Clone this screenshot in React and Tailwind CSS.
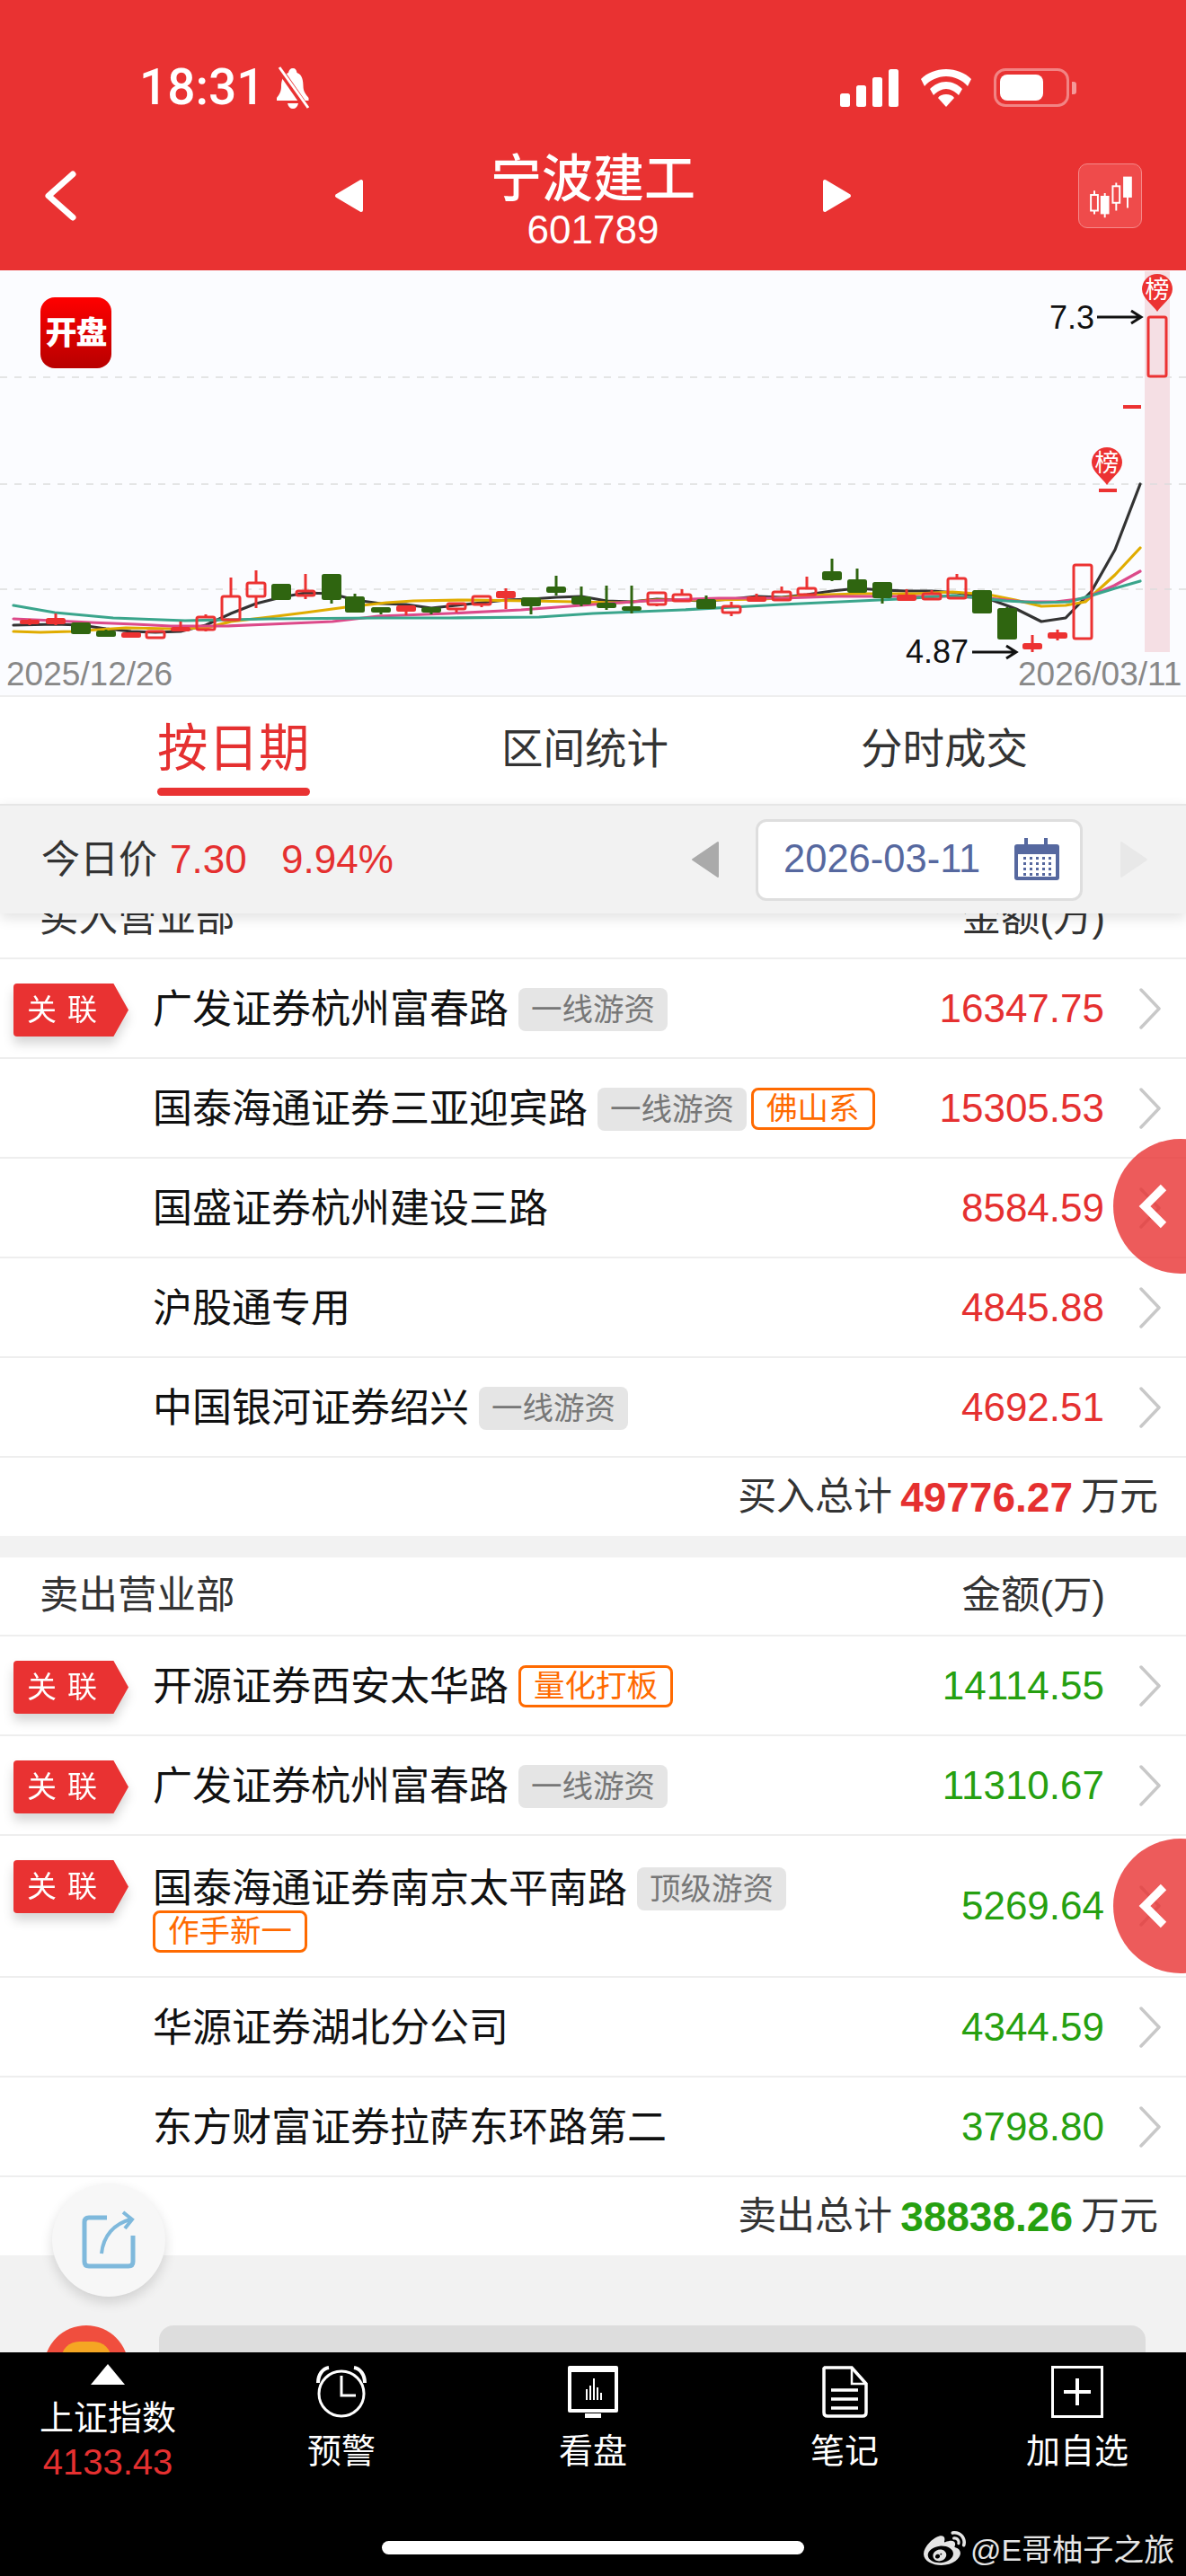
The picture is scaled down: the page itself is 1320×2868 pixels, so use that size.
import React from "react";
import { FaWeibo } from "react-icons/fa";

const RED = "#EC3232";
const GREEN = "#2F6510";

// [cx, bodyTop, bodyBottom, wickTop, wickBottom, type]  s=solid red, h=hollow red, g=green
const candles = [
  [33, 691, 694, 689, 696, "s"], [62, 689, 694, 683, 696, "s"], [90, 694, 705, 694, 705, "g"],
  [118, 703, 708, 701, 709, "g"], [146, 705, 709, 704, 710, "s"], [173, 703, 710, 703, 710, "h"],
  [201, 699, 702, 692, 702, "s"], [229, 687, 701, 684, 703, "h"], [257, 664, 690, 643, 690, "h"],
  [285, 649, 664, 635, 677, "h"], [313, 651, 667, 651, 668, "g"], [340, 658, 663, 639, 667, "h"],
  [369, 640, 667, 640, 672, "g"], [395, 665, 681, 661, 681, "g"], [424, 677, 681, 676, 684, "g"],
  [452, 675, 680, 675, 685, "s"], [480, 677, 681, 677, 684, "g"], [508, 672, 678, 672, 682, "h"],
  [536, 664, 673, 664, 676, "h"], [563, 659, 665, 655, 678, "s"], [591, 666, 674, 666, 684, "g"],
  [619, 654, 659, 641, 663, "g"], [647, 665, 672, 653, 675, "g"], [675, 672, 676, 652, 679, "g"],
  [703, 676, 679, 652, 683, "g"], [731, 660, 673, 659, 675, "h"], [759, 662, 669, 656, 669, "h"],
  [786, 668, 677, 663, 677, "g"], [814, 675, 682, 670, 686, "h"], [842, 665, 669, 661, 669, "s"],
  [870, 659, 668, 653, 668, "h"], [898, 655, 662, 642, 662, "h"], [926, 637, 645, 622, 647, "g"],
  [954, 646, 659, 633, 659, "g"], [982, 649, 665, 649, 672, "g"], [1009, 663, 668, 656, 668, "s"],
  [1037, 661, 667, 657, 667, "h"], [1065, 644, 666, 639, 666, "h"], [1093, 658, 682, 658, 683, "g"],
  [1121, 678, 711, 676, 711, "g"], [1149, 717, 722, 707, 726, "s"], [1177, 705, 710, 701, 713, "s"],
  [1205, 629, 711, 629, 711, "h"], [1288, 353, 419, 353, 420, "h"],
];

const ma = [
  ["#333333", "15,696 62,695 90,696 118,700 146,703 173,704 201,703 229,696 257,683 285,672 313,665 340,660 369,661 395,668 424,672 452,673 480,677 508,674 536,671 563,668 591,667 619,665 647,664 675,669 703,670 731,667 759,668 786,669 814,667 842,664 870,665 898,662 926,658 954,655 982,657 1009,658 1037,658 1065,660 1093,664 1131,678 1159,692 1186,688 1215,658 1241,612 1269,539"],
  ["#E0AC00", "15,703 45,704 80,703 110,701 140,699 190,700 230,699 257,692 300,687 340,682 385,676 430,671 460,669 520,668 590,669 640,670 690,671 730,668 790,668 850,667 920,662 960,661 1020,661 1060,659 1100,662 1130,668 1159,675 1186,674 1208,670 1241,640 1269,610"],
  ["#DC4A8A", "15,689 60,691 100,693 150,695 190,697 252,697 300,695 370,692 421,686 500,683 580,679 660,673 720,669 800,666 870,666 930,664 1000,664 1060,664 1100,666 1140,670 1175,670 1208,666 1240,652 1269,636"],
  ["#3AA58C", "15,674 61,682 126,688 206,691 300,689 421,688 500,688 600,687 660,683 760,679 870,673 1000,667 1060,663 1081,665 1120,669 1157,671 1190,670 1215,663 1241,655 1269,647"],
];

function Pin({ cx, cy }) {
  return (
    <g>
      <path d={`M${cx - 17} ${cy} A17 17 0 1 1 ${cx + 17} ${cy} C${cx + 17} ${cy + 10} ${cx + 5} ${cy + 17} ${cx} ${cy + 25} C${cx - 5} ${cy + 17} ${cx - 17} ${cy + 10} ${cx - 17} ${cy}Z`} fill={RED} />
      <text x={cx} y={cy + 10} textAnchor="middle" fontSize="27" fill="#fff" fontFamily="'Noto Sans CJK SC', sans-serif">榜</text>
    </g>
  );
}

function Chart() {
  return (
    <div className="relative h-[475px] bg-[#FBFCFF] border-b-2 border-[#EEEEEE]">
      <svg width="1320" height="473" viewBox="0 301 1320 473" className="block">
        <rect x="1274" y="302" width="28" height="424" fill="#F5DFE4" />
        {[420, 539, 656].map((y) => (
          <line key={y} x1="0" x2="1320" y1={y} y2={y} stroke="#DDDDDD" strokeWidth="1.5" strokeDasharray="8 8" />
        ))}
        {ma.map(([c, p]) => (
          <polyline key={c} points={p} fill="none" stroke={c} strokeWidth="3.2" strokeLinejoin="round" strokeLinecap="round" />
        ))}
        {candles.map(([x, t, b, wt, wb, k]) => {
          const col = k === "g" ? GREEN : RED;
          return (
            <g key={x}>
              <path d={`M${x} ${wt}V${t}M${x} ${b}V${wb}`} stroke={col} strokeWidth="3" fill="none" />
              {k === "h" ? (
                <rect x={x - 10} y={t} width="20" height={b - t} rx="2" fill="none" stroke={col} strokeWidth="3" />
              ) : (
                <rect x={x - 11} y={t - 1} width="22" height={b - t + 2} rx="2.5" fill={col} />
              )}
            </g>
          );
        })}
        <rect x="1223" y="544" width="20" height="4" fill={RED} />
        <rect x="1250" y="451" width="20" height="4" fill={RED} />
        <Pin cx={1288} cy={322} />
        <Pin cx={1232} cy={515} />
        <text x="1168" y="366" fontSize="36" fill="#111" fontFamily="'Liberation Sans', sans-serif">7.3</text>
        <path d="M1221 353H1268M1259 346L1270 353L1259 360" fill="none" stroke="#111" strokeWidth="3" />
        <text x="1008" y="738" fontSize="36" fill="#111" fontFamily="'Liberation Sans', sans-serif">4.87</text>
        <path d="M1082 726H1129M1120 719L1131 726L1120 733" fill="none" stroke="#111" strokeWidth="3" />
        <text x="7" y="763" fontSize="37" fill="#888" fontFamily="'Liberation Sans', sans-serif">2025/12/26</text>
        <text x="1133" y="763" fontSize="37" fill="#888" fontFamily="'Liberation Sans', sans-serif">2026/03/11</text>
      </svg>
      <div className="absolute left-[45px] top-[30px] w-[79px] h-[79px] rounded-[16px] bg-gradient-to-b from-[#FF0000] to-[#B80000] flex items-center justify-center text-white text-[35px] leading-none font-black tracking-[-1px] whitespace-nowrap">
        开盘
      </div>
    </div>
  );
}

function Header() {
  return (
    <div className="h-[301px] pt-[75px] bg-[#E93232] text-white">
      <div className="flex items-center h-[45px]">
        <span className="ml-[155px] [font-family:Roboto,sans-serif] font-medium text-[55px] leading-[45px]">18:31</span>
        <svg width="46" height="48" viewBox="0 0 46 48" className="ml-[8px]">
          <path d="M23 2c3 0 4 2 4.500 5 6 2 7 9 7 15 0 6 3 9 6 13v3H5v-3c3-4 5-7 5-13 0-6 2-13 8-15C18.500 4 20 2 23 2z" fill="#fff" />
          <path d="M17 41c1 4 3 6 6 6s5-2 6-6z" fill="#fff" />
          <path d="M6 0L38 46" stroke="#E93232" strokeWidth="7" />
          <path d="M8 1L40 46" stroke="#fff" strokeWidth="3" />
        </svg>
        <div className="ml-auto flex items-center mr-[122px]">
          <svg width="66" height="42" viewBox="0 0 66 42" fill="#fff">
            <rect x="0" y="27" width="11" height="15" rx="2.500" />
            <rect x="18" y="18" width="11" height="24" rx="2.500" />
            <rect x="36" y="9" width="11" height="33" rx="2.500" />
            <rect x="54" y="0" width="11" height="42" rx="2.500" />
          </svg>
          <svg width="58" height="42" viewBox="0 0 58 42" fill="#fff" className="ml-[23px]">
            <path d="M29 0c11 0 21 4 28 11l-4 8C47 12 38 8 29 8S11 12 5 19l-4-8C8 4 18 0 29 0z" />
            <path d="M29 14c7 0 13 3 18 8l-4 7c-4-4-9-7-14-7s-10 3-14 7l-4-7c5-5 11-8 18-8z" />
            <path d="M29 28c4 0 7 1 9 4l-9 10-9-10c2-3 5-4 9-4z" />
          </svg>
          <div className="ml-[24px] w-[84px] h-[43px] rounded-[13px] border-[3px] border-white/40 p-[4px] flex">
            <div className="w-[48px] h-full rounded-[8px] bg-white" />
          </div>
          <div className="ml-[3px] w-[5px] h-[14px] rounded-r-[3px] bg-white/50" />
        </div>
      </div>
      <div className="flex items-center pl-[48px] mt-[48px]">
        <svg width="38" height="56" viewBox="0 0 38 56" className="-mt-[10px]">
          <path d="M33 4L6 28L33 52" fill="none" stroke="#fff" strokeWidth="7" strokeLinecap="round" strokeLinejoin="round" />
        </svg>
        <svg width="34" height="38" viewBox="0 0 34 38" className="ml-[286px] -mt-[10px]">
          <path d="M30 3V35L3 19Z" fill="#fff" stroke="#fff" strokeWidth="4" strokeLinejoin="round" />
        </svg>
        <div className="w-[508px] flex flex-col items-center">
          <div className="text-[57px] leading-[62px] font-medium">宁波建工</div>
          <div className="text-[44px] leading-[44px] mt-[4px]">601789</div>
        </div>
        <svg width="34" height="38" viewBox="0 0 34 38" className="-mt-[10px]">
          <path d="M4 3V35L31 19Z" fill="#fff" stroke="#fff" strokeWidth="4" strokeLinejoin="round" />
        </svg>
        <div className="ml-[252px] -mt-[10px] w-[71px] h-[72px] rounded-[10px] bg-[#EF4B4B] border border-[#F58A8A]">
          <svg width="70" height="70" viewBox="0 0 71 72" fill="none" stroke="#fff" strokeWidth="2">
            <path d="M17 30V35M17 53V57M29 33V37M29 56V61M42 21V25M42 44V53M55 37V50" />
            <rect x="13" y="35" width="8" height="18" />
            <rect x="25" y="37" width="8" height="19" fill="#fff" />
            <rect x="38" y="25" width="8" height="19" />
            <rect x="51" y="15" width="8" height="22" fill="#fff" />
          </svg>
        </div>
      </div>
    </div>
  );
}

function Tabs() {
  return (
    <div className="h-[119px] bg-white flex items-start pt-[26px] pl-[175px]">
      <div className="w-[170px]">
        <div className="text-[56.500px] leading-[64px] text-[#E53030] whitespace-nowrap">按日期</div>
        <div className="mt-[11px] h-[9px] rounded-[5px] bg-[#E93232]" />
      </div>
      <div className="ml-[213px] w-[186px] text-[46.500px] leading-[64px] text-[#333] whitespace-nowrap">区间统计</div>
      <div className="ml-[214px] text-[46.500px] leading-[64px] text-[#333] whitespace-nowrap">分时成交</div>
    </div>
  );
}

function DateBar() {
  return (
    <div className="relative z-10 h-[122px] bg-[#F2F2F2] border-t-2 border-[#E6E6E6] shadow-[0_5px_14px_rgba(0,0,0,0.12)] flex items-center">
      <span className="ml-[46px] w-[129px] text-[43px] leading-none text-[#333] whitespace-nowrap">今日价</span>
      <span className="ml-[14px] w-[86px] text-[44px] leading-none text-[#E53030]">7.30</span>
      <span className="ml-[38px] w-[125px] text-[44px] leading-none text-[#E53030]">9.94%</span>
      <svg width="34" height="42" viewBox="0 0 34 42" className="ml-[330px]">
        <path d="M31 2V40L3 21Z" fill="#AAAAAA" stroke="#AAAAAA" strokeWidth="2" strokeLinejoin="round" />
      </svg>
      <div className="ml-[39px] w-[364px] h-[91px] rounded-[12px] bg-white border-[3px] border-[#DEDEDE] flex items-center pl-[28px]">
        <span className="w-[222px] text-[43.500px] leading-none text-[#56689F]">2026-03-11</span>
        <svg width="52" height="48" viewBox="0 0 52 48" className="ml-[34px]">
          <rect x="1" y="7" width="50" height="40" rx="3" fill="#56689F" />
          <rect x="5" y="18" width="42" height="25" fill="#fff" />
          <rect x="12" y="0" width="4" height="12" fill="#56689F" />
          <rect x="34" y="0" width="4" height="12" fill="#56689F" />
          {[21, 27, 33, 39].map((y) =>
            [11, 18, 25, 32, 39].map((x) => <rect key={`${x}-${y}`} x={x} y={y} width="3" height="3" fill="#56689F" />)
          )}
        </svg>
      </div>
      <svg width="34" height="42" viewBox="0 0 34 42" className="ml-[40px]">
        <path d="M3 2V40L31 21Z" fill="#E8E8E8" stroke="#E8E8E8" strokeWidth="2" strokeLinejoin="round" />
      </svg>
    </div>
  );
}

function Gray({ children }) {
  return <span className="h-[48px] px-[14px] rounded-[8px] bg-[#E5E5E5] text-[#777] text-[34.500px] leading-[48px] whitespace-nowrap">{children}</span>;
}
function Orange({ children }) {
  return <span className="h-[47px] px-[14px] rounded-[8px] border-[3px] border-[#FF6A00] text-[#FF6A00] text-[34.500px] leading-[41px] whitespace-nowrap">{children}</span>;
}

function Badge() {
  return (
    <div className="drop-shadow-[0_8px_6px_rgba(0,0,0,0.16)]">
      <div className="w-[128px] h-[59px] bg-[#E93232] rounded-l-[4px] [clip-path:polygon(0_0,87%_0,100%_50%,87%_100%,0_100%)] flex items-center pl-[15px] text-white text-[33px] leading-none whitespace-nowrap tracking-[12px]">
        关联
      </div>
    </div>
  );
}

function Row({ badge, name, tags = [], amount, color, tall }) {
  return (
    <div className={`${tall ? "h-[158px]" : "h-[111px]"} border-b-2 border-[#EEEEEE] bg-white flex items-center`}>
      <div className="w-[170px] shrink-0 self-start pt-[27px] pl-[15px]">{badge && <Badge />}</div>
      <div className={`w-[870px] flex flex-wrap items-center gap-x-[5px] ${tall ? "pt-[8px]" : "pt-[2px]"}`}>
        <span className="text-[44px] leading-[47px] text-[#111] mr-[6px] whitespace-nowrap">{name}</span>
        {tags.map(([k, t]) => (k === "g" ? <Gray key={t}>{t}</Gray> : <Orange key={t}>{t}</Orange>))}
      </div>
      <span className={`ml-auto text-[44px] leading-none ${color}`}>{amount}</span>
      <svg width="26" height="46" viewBox="0 0 26 46" className="ml-[38px] mr-[27px] shrink-0">
        <path d="M3 2L23 23L3 44" fill="none" stroke="#C8C8C8" strokeWidth="3.500" strokeLinecap="round" strokeLinejoin="round" />
      </svg>
    </div>
  );
}

function SectionHead({ title }) {
  return (
    <div className="h-[88px] bg-white border-b-2 border-[#EEEEEE] flex items-center justify-between pl-[44px] pr-[90px] text-[#333] text-[43.500px] leading-none">
      <span>{title}</span>
      <span>金额(万)</span>
    </div>
  );
}

function Total({ label, value, color }) {
  return (
    <div className="h-[87px] bg-white flex items-center justify-end pr-[31px] text-[#333] text-[43px] leading-none whitespace-nowrap">
      <span>{label}</span>
      <span className={`mx-[9px] text-[46px] font-bold ${color}`}>{value}</span>
      <span>万元</span>
    </div>
  );
}

const R = "text-[#E53030]";
const G = "text-[#26A010]";

function Footer() {
  const label = "text-[38px] leading-[44px] text-white mt-[15px] whitespace-nowrap";
  return (
    <div className="relative h-[249px] bg-black flex flex-col items-center">
      <div className="w-full flex">
        <div className="w-[240px] flex flex-col items-center pt-[13px]">
          <svg width="38" height="23" viewBox="0 0 38 23"><path d="M19 0L38 23H0Z" fill="#fff" /></svg>
          <div className="text-[38px] leading-[44px] text-white mt-[15px] whitespace-nowrap">上证指数</div>
          <div className="text-[40px] leading-[44px] text-[#E53030] mt-[5px]">4133.43</div>
        </div>
        <div className="w-[280px] flex flex-col items-center pt-[15px]">
          <svg width="60" height="58" viewBox="0 0 60 58" fill="none" stroke="#fff">
            <circle cx="30" cy="31" r="25" strokeWidth="3" />
            <path d="M30 11V33H46" strokeWidth="3" />
            <path d="M4 19C4 10 9 3 16 2M56 19C56 10 51 3 44 2" strokeWidth="4" />
          </svg>
          <div className={label}>预警</div>
        </div>
        <div className="w-[280px] flex flex-col items-center pt-[15px]">
          <svg width="58" height="58" viewBox="0 0 58 58">
            <rect x="1" y="0" width="56" height="52" rx="2" fill="#fff" />
            <rect x="5" y="7" width="48" height="41" fill="#000" />
            <path d="M22 38V26M26 38V22M30 38V14M34 38V24M38 38V30" stroke="#fff" strokeWidth="2" />
            <rect x="20" y="53" width="18" height="5" fill="#fff" />
          </svg>
          <div className={label}>看盘</div>
        </div>
        <div className="w-[280px] flex flex-col items-center pt-[15px]">
          <svg width="52" height="58" viewBox="0 0 52 58" fill="none" stroke="#fff" strokeWidth="3.500">
            <path d="M3 3V52Q3 56 7 56H46Q50 56 50 52V20L34 2H4Z" />
            <path d="M34 2V20H50" strokeWidth="2.500" />
            <path d="M11 27H41M11 37H41M11 47H41" />
          </svg>
          <div className={label}>笔记</div>
        </div>
        <div className="w-[238px] flex flex-col items-center pt-[15px]">
          <svg width="58" height="58" viewBox="0 0 58 58" fill="none" stroke="#fff">
            <rect x="1.500" y="1.500" width="55" height="55" strokeWidth="3" />
            <path d="M14 29H44M29 14V44" strokeWidth="4" />
          </svg>
          <div className={label}>加自选</div>
        </div>
      </div>
      <div className="absolute left-[425px] top-[210px] w-[470px] h-[15px] rounded-[8px] bg-white" />
      <div className="absolute left-[1028px] top-[196px] flex items-center text-[#E5E5E5]">
        <FaWeibo size={47} />
        <span className="ml-[5px] text-[34px] leading-none whitespace-nowrap">@E哥柚子之旅</span>
      </div>
    </div>
  );
}

function Collapse({ top }) {
  return (
    <div style={{ top }} className="absolute z-20 left-[1239px] w-[150px] h-[150px] rounded-full bg-[#E93232]/80">
      <svg width="40" height="54" viewBox="0 0 40 54" className="absolute left-[24px] top-[48px]">
        <path d="M32 6L11 27L32 48" fill="none" stroke="#fff" strokeWidth="9" />
      </svg>
    </div>
  );
}

export default function App() {
  return (
    <div className="relative w-[1320px] h-[2868px] overflow-hidden bg-white [font-family:'Liberation_Sans','Noto_Sans_CJK_SC',sans-serif]">
      <Header />
      <Chart />
      <Tabs />
      <DateBar />
      <div className="-mt-[37px]">
        <SectionHead title="买入营业部" />
        <Row badge name="广发证券杭州富春路" tags={[["g", "一线游资"]]} amount="16347.75" color={R} />
        <Row name="国泰海通证券三亚迎宾路" tags={[["g", "一线游资"], ["o", "佛山系"]]} amount="15305.53" color={R} />
        <Row name="国盛证券杭州建设三路" amount="8584.59" color={R} />
        <Row name="沪股通专用" amount="4845.88" color={R} />
        <Row name="中国银河证券绍兴" tags={[["g", "一线游资"]]} amount="4692.51" color={R} />
        <Total label="买入总计" value="49776.27" color={R} />
        <div className="h-[24px] bg-[#F2F2F2]" />
        <SectionHead title="卖出营业部" />
        <Row badge name="开源证券西安太华路" tags={[["o", "量化打板"]]} amount="14114.55" color={G} />
        <Row badge name="广发证券杭州富春路" tags={[["g", "一线游资"]]} amount="11310.67" color={G} />
        <Row badge tall name="国泰海通证券南京太平南路" tags={[["g", "顶级游资"], ["o", "作手新一"]]} amount="5269.64" color={G} />
        <Row name="华源证券湖北分公司" amount="4344.59" color={G} />
        <Row name="东方财富证券拉萨东环路第二" amount="3798.80" color={G} />
        <Total label="卖出总计" value="38838.26" color={G} />
        <div className="h-[108px] bg-[#F2F2F2] overflow-hidden pt-[78px] pl-[49px] flex items-start gap-[34px]">
          <div className="w-[94px] h-[94px] shrink-0 rounded-full bg-[#F04E3E] flex justify-center pt-[18px]">
            <div className="w-[56px] h-[40px] rounded-full bg-[#F5A623]" />
          </div>
          <div className="w-[1098px] h-[100px] rounded-[16px] bg-[#DDDDDD]" />
        </div>
      </div>
      <Footer />
      <Collapse top={1268} />
      <Collapse top={2047} />
      <div className="absolute z-20 left-[58px] top-[2431px] w-[126px] h-[126px] rounded-full bg-[#F7F7F7] shadow-[0_6px_14px_rgba(0,0,0,0.14)] flex items-center justify-center">
        <svg width="60" height="66" viewBox="0 0 60 66" fill="none" stroke="#7FB9DC" strokeWidth="5">
          <path d="M28 8H8Q3 8 3 13V57Q3 62 8 62H52Q57 62 57 57V28" />
          <path d="M22 48C24 28 36 15 54 10" strokeWidth="4" />
          <path d="M46 2L56 10L48 20" strokeWidth="4" />
        </svg>
      </div>
    </div>
  );
}
